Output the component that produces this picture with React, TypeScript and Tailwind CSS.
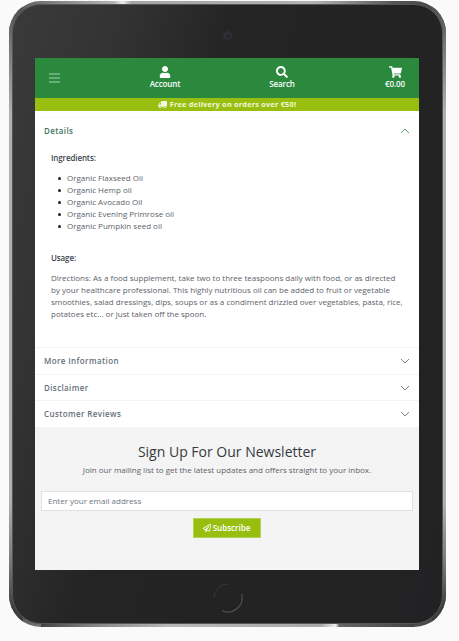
import React from "react";
import { FaUser, FaSearch, FaShoppingCart, FaTruck, FaRegPaperPlane } from "react-icons/fa";

const ingredients = [
  "Organic Flaxseed Oil",
  "Organic Hemp oil",
  "Organic Avocado Oil",
  "Organic Evening Primrose oil",
  "Organic Pumpkin seed oil",
];

const directions = [
  "Directions: As a food supplement, take two to three teaspoons daily with food, or as directed",
  "by your healthcare professional. This highly nutritious oil can be added to fruit or vegetable",
  "smoothies, salad dressings, dips, soups or as a condiment drizzled over vegetables, pasta, rice,",
  "potatoes etc... or just taken off the spoon.",
];

function Chevron({ up = false }: { up?: boolean }) {
  return (
    <svg width="10" height="6" viewBox="0 0 10 6" fill="none" strokeWidth="0.9" className={up ? "mb-px stroke-[#4f9864]" : "mb-px stroke-[#6c757d]"}>
      <path d={up ? "M1 5 L5 1 L9 5" : "M1 1 L5 5 L9 1"} />
    </svg>
  );
}

function Row({ title, className }: { title: string; className: string }) {
  return (
    <button className={`flex w-full items-center justify-between border-t border-[#f4f4f4] px-[9px] text-[8px] font-semibold tracking-[0.38px] text-[#66707a] ${className}`}>
      <span>{title}</span>
      <Chevron />
    </button>
  );
}

function Header() {
  return (
    <header className="flex h-10 shrink-0 justify-between bg-[#2a893c] text-[8px] font-semibold text-white">
      <div className="flex w-[39px] flex-col items-end justify-center gap-[2px] pr-[14px] text-[#6aac77]">
        <i className="h-[2px] w-[11px] bg-current" />
        <i className="h-[2px] w-[11px] bg-current" />
        <i className="h-[2px] w-[11px] bg-current" />
      </div>
      <div className="ml-[61px] flex w-[60px] flex-col items-center pt-2">
        <FaUser size={12} />
        <span className="leading-[11px] tracking-[-0.1px]">Account</span>
      </div>
      <div className="ml-[57px] flex w-[60px] flex-col items-center pt-2">
        <FaSearch size={12} />
        <span className="leading-[11px] tracking-[-0.1px]">Search</span>
      </div>
      <div className="ml-auto flex w-[48px] flex-col items-center pt-2">
        <FaShoppingCart size={13} className="h-3" />
        <span className="leading-[11px] tracking-[-0.1px]">€0.00</span>
      </div>
    </header>
  );
}

function Screen() {
  return (
    <main className="flex h-[512px] w-[384px] flex-col overflow-hidden bg-white whitespace-nowrap">
      <Header />
      <div className="flex h-[13px] shrink-0 items-center justify-center gap-[3px] bg-[#98bf0f] text-[7.3px] leading-[13px] font-bold tracking-[0.24px] text-[#f3f8df]">
        <FaTruck size={9} className="-scale-x-100" />
        <span>Free delivery on orders over €50!</span>
      </div>
      <section className="mt-[6px] h-[230px] shrink-0 border-t border-[#fafafa]">
        <div className="flex h-[26px] items-center justify-between px-[9px] text-[8px] font-semibold tracking-[0.38px] text-[#3f7560]">
          <span>Details</span>
          <Chevron up />
        </div>
        <div className="px-4 pt-2 text-[8px] leading-[12px] text-[#5c6268]">
          <h3 className="font-semibold tracking-[-0.12px] text-[#40454b]">Ingredients:</h3>
          <ul className="mt-2 pl-[7px]">
            {ingredients.map((item) => (
              <li key={item} className="flex items-center gap-[6px]">
                <span className="size-[3px] rounded-full bg-[#222]" />
                {item}
              </li>
            ))}
          </ul>
          <h3 className="mt-5 font-semibold tracking-[-0.12px] text-[#40454b]">Usage:</h3>
          <p className="mt-2">
            {directions.map((line) => (
              <span key={line} className="block">{line}</span>
            ))}
          </p>
        </div>
      </section>
      <Row title="More Information" className="h-[27px] shrink-0" />
      <Row title="Disclaimer" className="h-[26px] shrink-0 pt-px" />
      <Row title="Customer Reviews" className="h-[27px] shrink-0" />
      <section className="flex flex-1 flex-col items-center bg-[#f4f4f4] px-[6px]">
        <h2 className="mt-[15px] text-[14px] leading-[20px] text-[#343a40]">Sign Up For Our Newsletter</h2>
        <p className="mt-[2px] text-[8px] leading-[12px] text-[#5c6268]">Join our mailing list to get the latest updates and offers straight to your inbox.</p>
        <input
          placeholder="Enter your email address"
          className="mt-[15px] h-5 w-full shrink-0 border border-[#dee2e6] bg-white px-[6px] pb-[2px] text-[8px] text-[#6c757d] placeholder:text-[#6c757d]"
        />
        <button className="mt-[7px] mr-px flex h-5 w-[68px] shrink-0 items-center justify-center gap-[2px] border border-[#b6d256] bg-[#98bf0f] text-[8px] font-semibold text-white">
          <FaRegPaperPlane size={8} />
          <span>Subscribe</span>
        </button>
      </section>
    </main>
  );
}

export default function App() {
  return (
    <div className="h-[641px] w-[459px] overflow-hidden bg-[#fafafa] pt-px pl-[9px] font-['Open_Sans','Noto_Sans',sans-serif]">
      <div className="relative h-[626px] w-[437px] rounded-[32px] bg-[#aaaaaa] bg-[linear-gradient(90deg,#505050_0%,#777_8%,#b5b5b5_24%,#eee_26%,#a5a5a5_28%,#b2b2b2_70%,#555_88%,#444_100%)] p-[3px]">
        <div className="absolute inset-x-8 bottom-0 h-[5px] bg-[linear-gradient(90deg,#444_0%,#888_15%,#b8b8b8_35%,#a8a8a8_75%,#eee_79%,#666_80%,#444_100%)]" />
        <div className="absolute inset-0 rounded-[32px] bg-[linear-gradient(180deg,#4a4a4a_0%,#777_7%,#b0b0b0_18%,#b0b0b0_80%,#777_90%,#3d3d3d_97%)] [clip-path:polygon(0_0,14px_0,14px_100%,0_100%)]" />
        <div className="absolute inset-0 rounded-[32px] bg-[linear-gradient(180deg,#4a4a4a_0%,#777_7%,#b0b0b0_18%,#b0b0b0_80%,#777_90%,#3d3d3d_97%)] [clip-path:polygon(calc(100%-14px)_0,100%_0,100%_100%,calc(100%-14px)_100%)]" />
        <div className="relative h-[620px] w-[431px] rounded-[29px] border border-[#555] bg-[#242424] bg-[linear-gradient(105deg,#3a3a3a_0%,#333_18%,#242424_38%,#222224_100%)] pt-[53px] pl-[22px]">
          <Screen />
          <div className="absolute top-[26px] left-[210px] flex size-[9px] items-center justify-center rounded-full bg-[#2f2e36]">
            <i className="size-[4px] rounded-full bg-[#24242c]" />
          </div>
          <svg className="absolute top-[578px] left-[200px]" width="30" height="30" viewBox="0 0 30 30" fill="none">
            <path d="M1 15 A14 14 0 0 1 15 1" stroke="#393939" />
            <path d="M28.5 11 A14 14 0 0 1 9 27.5" stroke="#505050" strokeWidth="1.2" />
          </svg>
        </div>
      </div>
    </div>
  );
}
